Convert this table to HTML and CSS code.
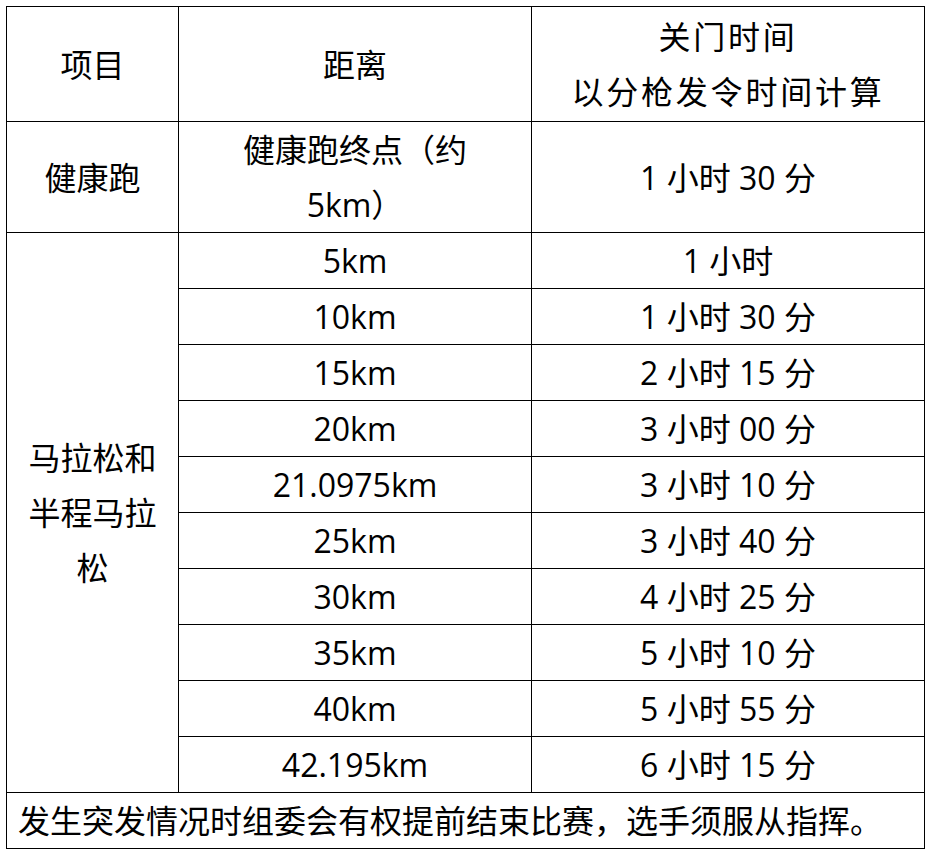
FILE: index.html
```html
<!DOCTYPE html>
<html lang="zh-CN">
<head>
<meta charset="utf-8">
<title>关门时间</title>
<link rel="stylesheet" href="styles.css">
</head>
<body>
<table class="cutoff">
  <colgroup>
    <col class="c-item">
    <col class="c-dist">
    <col class="c-time">
  </colgroup>
  <thead>
    <tr class="head">
      <th>项目</th>
      <th>距离</th>
      <th class="spaced">关门时间<br>以分枪发令时间计算</th>
    </tr>
  </thead>
  <tbody>
    <tr class="double">
      <td>健康跑</td>
      <td>健康跑终点（约<br>5km）</td>
      <td>1 小时 30 分</td>
    </tr>
    <tr>
      <td rowspan="10">马拉松和<br>半程马拉<br>松</td>
      <td>5km</td>
      <td>1 小时</td>
    </tr>
    <tr><td>10km</td><td>1 小时 30 分</td></tr>
    <tr><td>15km</td><td>2 小时 15 分</td></tr>
    <tr><td>20km</td><td>3 小时 00 分</td></tr>
    <tr><td>21.0975km</td><td>3 小时 10 分</td></tr>
    <tr><td>25km</td><td>3 小时 40 分</td></tr>
    <tr><td>30km</td><td>4 小时 25 分</td></tr>
    <tr><td>35km</td><td>5 小时 10 分</td></tr>
    <tr><td>40km</td><td>5 小时 55 分</td></tr>
    <tr><td>42.195km</td><td>6 小时 15 分</td></tr>
    <tr>
      <td colspan="3" class="note">发生突发情况时组委会有权提前结束比赛，选手须服从指挥。</td>
    </tr>
  </tbody>
</table>
</body>
</html>
```
FILE: styles.css
```css
html, body {
  margin: 0;
  padding: 0;
  background: #ffffff;
}

body {
  padding: 6px;
  font-family: "Open Sans", "Noto Sans CJK SC", sans-serif;
  color: #000000;
}

.cutoff {
  border-collapse: collapse;
  table-layout: fixed;
  width: 918px;
  font-size: 32px;
}

.c-item { width: 172px; }
.c-dist { width: 353px; }
.c-time { width: 393px; }

.cutoff th,
.cutoff td {
  border: 1px solid #000000;
  padding: 0;
  text-align: center;
  vertical-align: middle;
  font-weight: normal;
  line-height: 55px;
  height: 55px;
}

.head th {
  padding: 2px 0;
  line-height: 55px;
}

.spaced {
  letter-spacing: 2.8px;
}

.cutoff td.note {
  text-align: left;
  padding-left: 11px;
}
```
